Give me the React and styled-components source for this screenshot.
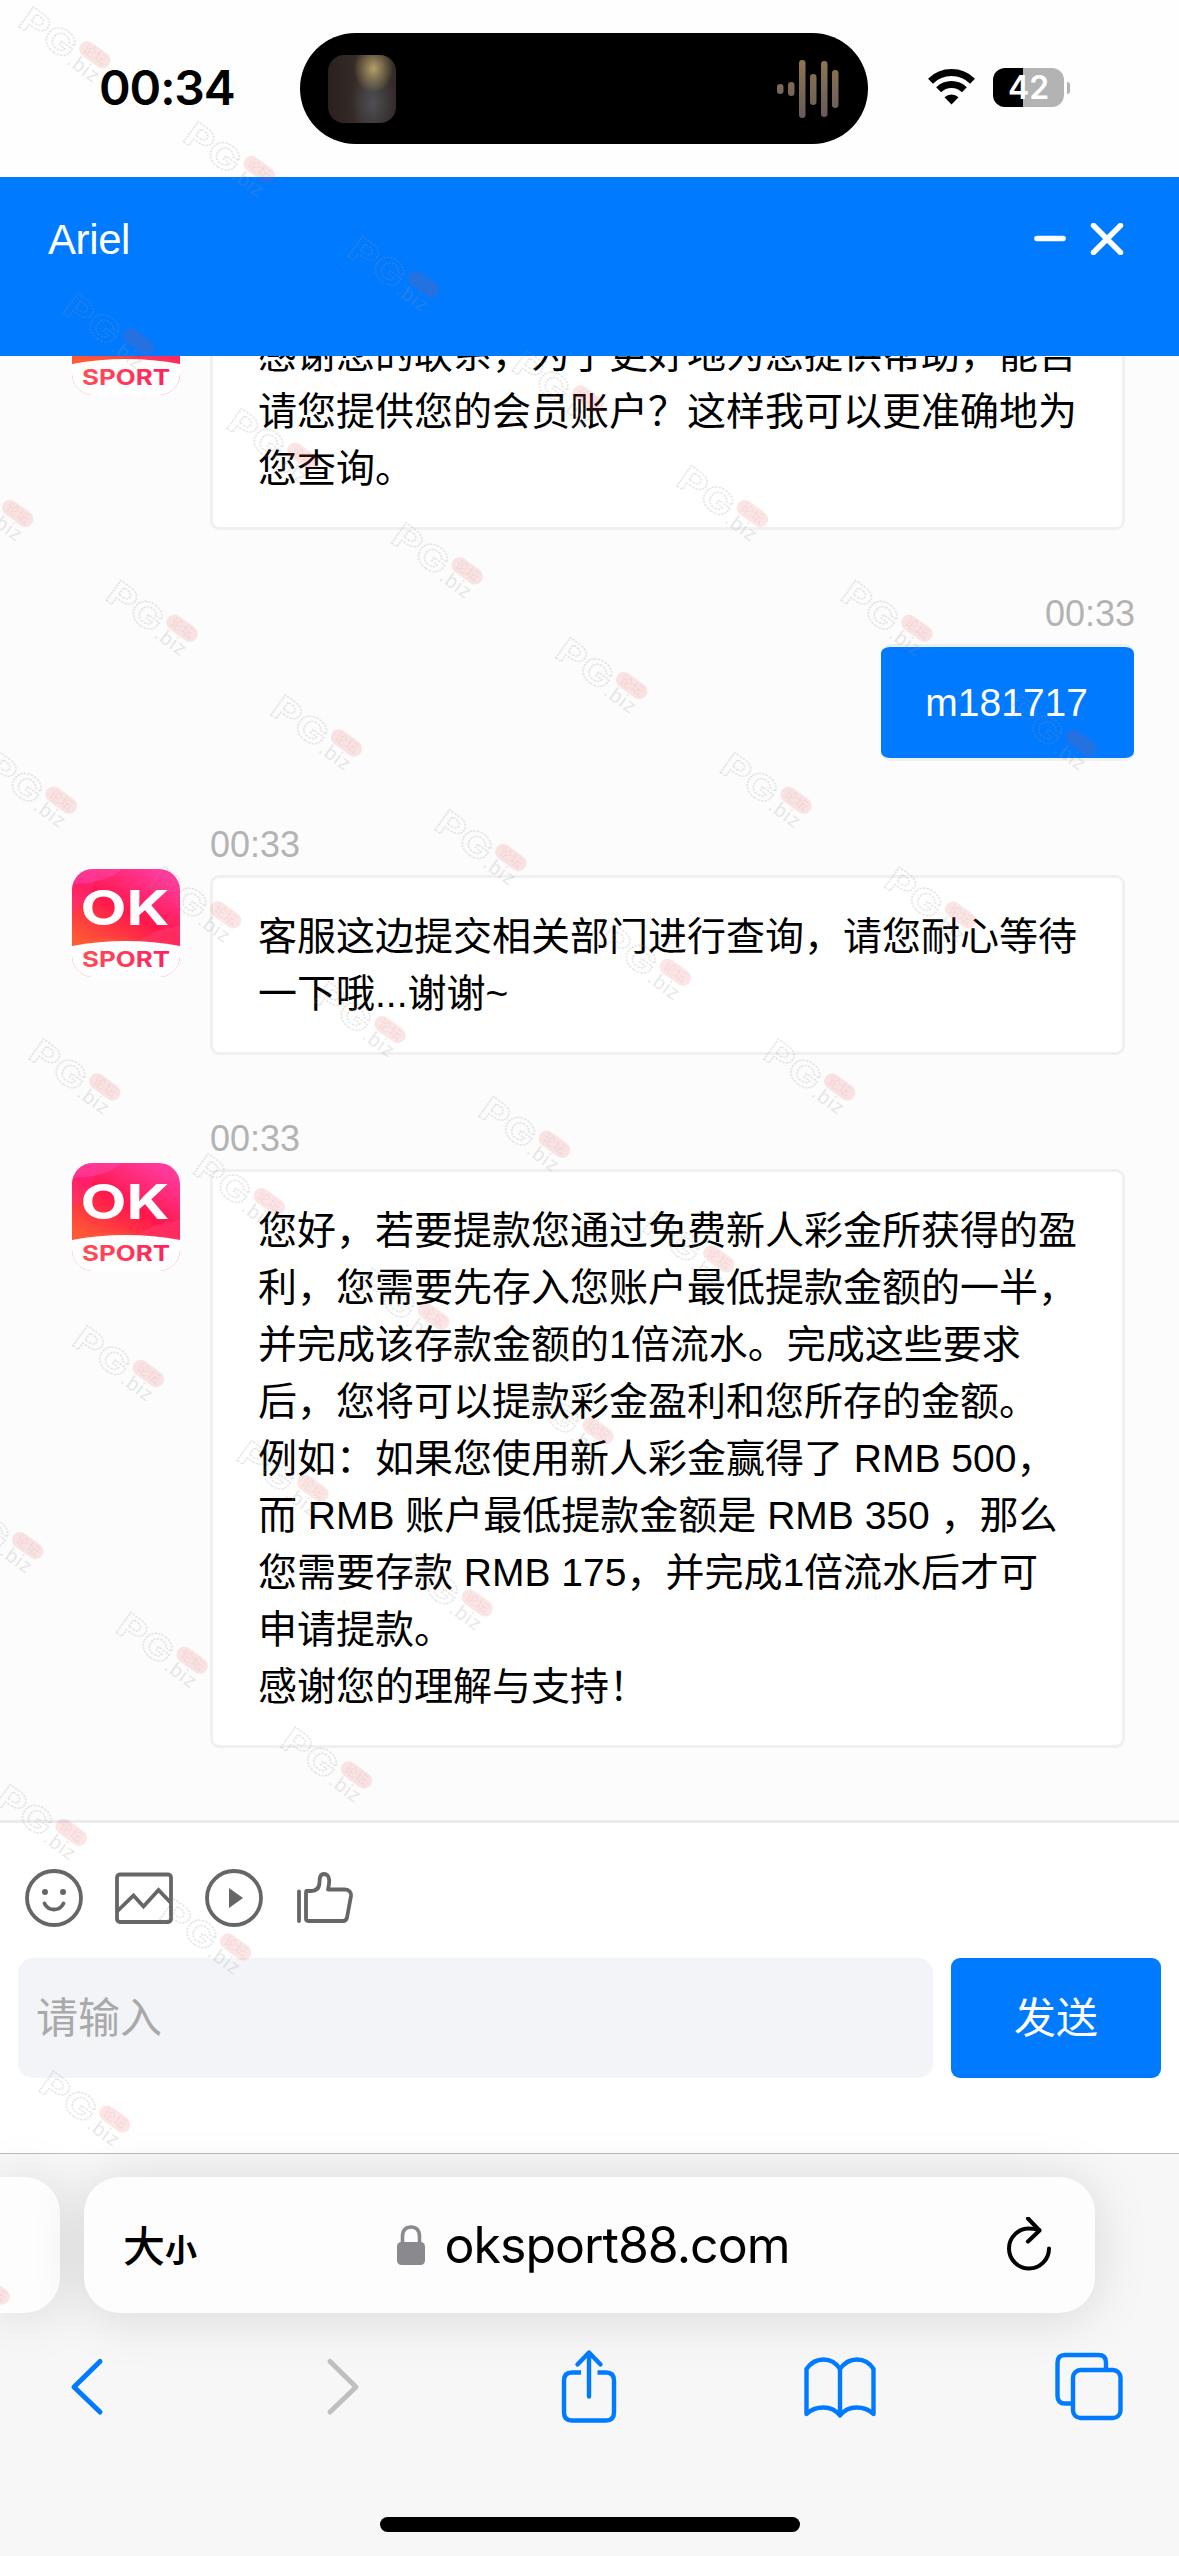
import styled, { createGlobalStyle } from 'styled-components';

const GlobalStyle = createGlobalStyle`
  * {
    box-sizing: border-box;
  }

  body {
    margin: 0;
    font-family: 'Liberation Sans', 'Noto Sans CJK SC', sans-serif;
    color: #000;
  }

  svg {
    display: block;
    flex-shrink: 0;
  }
`;

const Screen = styled.div`
  position: relative;
  display: flex;
  flex-direction: column;
  width: 1179px;
  height: 2556px;
  overflow: hidden;
  background: #fefefe;
`;

/* status bar */

const StatusBar = styled.div`
  display: grid;
  grid-template-columns: 300px 568px 1fr;
  height: 177px;
  flex-shrink: 0;
`;

const Clock = styled.div`
  padding: 58px 0 0 99px;
  font-family: Inter, sans-serif;
  font-size: 48px;
  font-weight: 600;
  line-height: 60px;
  letter-spacing: -1.1px;
`;

const Island = styled.div`
  display: flex;
  align-items: center;
  justify-content: space-between;
  height: 111px;
  margin-top: 33px;
  padding: 0 29px 0 28px;
  border-radius: 56px;
  background: #000;
`;

const Artwork = styled.div`
  width: 68px;
  height: 68px;
  border-radius: 16px;
  background:
    radial-gradient(ellipse 20px 24px at 67% 20%, #b3a068, transparent),
    radial-gradient(ellipse 22px 36px at 66% 70%, #4e4f55, transparent),
    linear-gradient(90deg, #29211f, #382e29 50%, #332b2a);
`;

const StatusIcons = styled.div`
  display: flex;
  gap: 18px;
  padding: 68px 0 0 60px;
`;

const Battery = styled.div`
  display: flex;
  align-items: center;
  height: 39px;
`;

const BatteryBody = styled.div`
  width: 71px;
  height: 39px;
  border-radius: 12px;
  background: linear-gradient(90deg, #000 30px, #b3b3b3 30px);
  color: #fff;
  font-family: Inter, sans-serif;
  font-size: 32px;
  font-weight: 600;
  line-height: 39px;
  text-align: center;
`;

const BatteryCap = styled.div`
  width: 3px;
  height: 12px;
  margin-left: 3px;
  border-radius: 0 3px 3px 0;
  background: #b3b3b3;
`;

/* chat */

const Header = styled.header`
  display: flex;
  justify-content: space-between;
  height: 179px;
  padding: 38px 55px 0 48px;
  flex-shrink: 0;
  background: #007aff;
  color: #fff;
`;

const AgentName = styled.div`
  padding-top: 1px;
  font-size: 42px;
  line-height: 48px;
  letter-spacing: -0.4px;
`;

const HeaderActions = styled.div`
  display: flex;
  align-items: flex-start;
  gap: 23px;
  padding-top: 8px;
`;

const Messages = styled.main`
  display: flex;
  flex-direction: column;
  justify-content: flex-end;
  gap: 63px;
  height: 1464px;
  padding-bottom: 72px;
  flex-shrink: 0;
  overflow: hidden;
  background: #fcfcfc;
`;

const AgentMessage = styled.div`
  display: grid;
  grid-template-columns: 108px 915px;
  column-gap: 30px;
  padding-left: 72px;
  flex-shrink: 0;
`;

const AvatarSlot = styled.div`
  padding-top: 45px;
`;

const UserMessage = styled.div`
  display: flex;
  flex-direction: column;
  align-items: flex-end;
  padding-right: 44px;
  flex-shrink: 0;
`;

const Time = styled.div`
  height: 42px;
  margin-bottom: 9px;
  color: #b3b3b3;
  font-size: 36px;
  line-height: 42px;
`;

const Bubble = styled.div`
  padding: 30px 0 30px 45px;
  border: 3px solid #f0f0f0;
  border-radius: 9px;
  background: #fff;
  font-size: 39px;
  line-height: 57px;
  white-space: nowrap;
`;

const Line = styled.div`
  height: 57px;
`;

const UserBubble = styled.div`
  height: 117px;
  padding: 0 46px 0 44px;
  margin-right: 1px;
  border: solid #f0f0f0;
  border-width: 3px 0;
  border-radius: 9px;
  background: #007aff;
  color: #fff;
  font-size: 39px;
  line-height: 111px;
`;

/* composer */

const Composer = styled.section`
  height: 333px;
  padding: 45px 18px 0;
  border-top: 3px solid #ebebeb;
  flex-shrink: 0;
  background: #fff;
`;

const Tools = styled.div`
  display: flex;
  gap: 30px;
  padding: 0 6px;
  margin-bottom: 30px;
`;

const InputRow = styled.div`
  display: flex;
  gap: 18px;
`;

const Input = styled.div`
  flex: 1;
  height: 120px;
  padding-left: 18px;
  border-radius: 15px;
  background: #f2f4f8;
  color: #a9a9a9;
  font-size: 42px;
  line-height: 121px;
`;

const SendButton = styled.button`
  width: 210px;
  height: 120px;
  padding: 0;
  border: 0;
  border-radius: 9px;
  background: #007aff;
  color: #fff;
  font: inherit;
  font-size: 42px;
  line-height: 121px;
`;

/* browser chrome */

const Browser = styled.footer`
  flex: 1;
  border-top: 1px solid #bbb;
  background: #f7f7f7;
`;

const TabStrip = styled.div`
  display: flex;
  gap: 24px;
  padding-top: 23px;
`;

const PreviousTab = styled.div`
  width: 60px;
  height: 136px;
  border-radius: 0 36px 36px 0;
  background: #fdfdfd;
  box-shadow: 0 4px 54px rgba(0, 0, 0, 0.13);
`;

const AddressBar = styled.div`
  display: grid;
  grid-template-columns: 1fr auto 1fr;
  align-items: center;
  width: 1011px;
  height: 136px;
  padding: 0 43px 0 39px;
  border-radius: 36px;
  background: #fdfdfd;
  box-shadow: 0 4px 54px rgba(0, 0, 0, 0.13);
`;

const TextSize = styled.div`
  display: flex;
  align-items: baseline;
  padding-top: 2px;
  font-family: 'Noto Sans CJK SC', sans-serif;
  font-size: 42px;
  font-weight: 500;
  line-height: 60px;
`;

const SmallGlyph = styled.span`
  font-size: 32px;
  font-weight: 700;
`;

const Address = styled.div`
  display: flex;
  align-items: center;
  gap: 20px;
  padding-left: 11px;
  font-family: Inter, sans-serif;
  font-size: 50px;
  line-height: 60px;
  letter-spacing: -1px;
`;

const ReloadSlot = styled.div`
  justify-self: end;
`;

const NavBar = styled.nav`
  display: grid;
  grid-template-columns: 257px 234px 243px 251px 71px;
  align-items: center;
  height: 80px;
  margin-top: 34px;
  padding-left: 68px;
`;

const HomeIndicator = styled.div`
  width: 420px;
  height: 15px;
  margin: 90px auto 0 380px;
  border-radius: 8px;
  background: #000;
`;

const WatermarkLayer = styled.svg`
  position: absolute;
  top: 0;
  left: 0;
  pointer-events: none;
`;

const agentMessages = [
  {
    id: 1,
    lines: [
      '感谢您的联系,为了更好地为您提供帮助,能否',
      '请您提供您的会员账户?这样我可以更准确地为',
      '您查询。',
    ],
  },
  {
    id: 2,
    lines: ['客服这边提交相关部门进行查询,请您耐心等待', '一下哦...谢谢~'],
  },
  {
    id: 3,
    lines: [
      '您好,若要提款您通过免费新人彩金所获得的盈',
      '利,您需要先存入您账户最低提款金额的一半,',
      '并完成该存款金额的1倍流水。完成这些要求',
      '后,您将可以提款彩金盈利和您所存的金额。',
      '例如:如果您使用新人彩金赢得了 RMB 500,',
      '而 RMB 账户最低提款金额是 RMB 350 ,那么',
      '您需要存款 RMB 175,并完成1倍流水后才可',
      '申请提款。',
      '感谢您的理解与支持!',
    ],
  },
].map((message) => ({
  ...message,
  // full-width punctuation
  lines: message.lines.map((line) =>
    line.replace(/,/g, '\uff0c').replace(/:/g, '\uff1a').replace(/\?/g, '\uff1f').replace(/!/g, '\uff01')
  ),
}));

const waveBars = [
  [84, 94],
  [82, 96],
  [60, 118],
  [74, 105],
  [61, 117],
  [70, 108],
];

// [row, first, last] of the diagonal watermark grid
const watermarkRows = [
  [0, 0, 6],
  [1, 2, 7],
  [2, 3, 8],
  [3, 5, 9],
  [4, 7, 10],
  [5, 9, 11],
  [6, 10, 12],
  [7, 12, 13],
  [8, 14, 14],
  [9, 15, 15],
];

function Avatar() {
  return (
    <svg width="108" height="108" viewBox="0 0 108 108">
      <defs>
        <linearGradient id="logoBg" x1="0.75" y1="0" x2="0.3" y2="0.8">
          <stop offset="0" stopColor="#ff3a9c" />
          <stop offset="0.5" stopColor="#ff174c" />
          <stop offset="1" stopColor="#ff5a35" />
        </linearGradient>
        <radialGradient id="logoGlow" cx="0.45" cy="0.72" r="0.45">
          <stop offset="0" stopColor="#ff9a3c" />
          <stop offset="1" stopColor="#ff5a35" stopOpacity="0" />
        </radialGradient>
        <linearGradient id="sportFill">
          <stop offset="0" stopColor="#ff4f55" />
          <stop offset="1" stopColor="#ff1f5e" />
        </linearGradient>
        <clipPath id="logoClip">
          <rect width="108" height="108" rx="21" />
        </clipPath>
      </defs>
      <g clipPath="url(#logoClip)">
        <rect width="108" height="108" fill="url(#logoBg)" />
        <ellipse cx="45" cy="76" rx="52" ry="22" fill="url(#logoGlow)" />
        <path d="M0 0h25Q22 30 0 45z" fill="#ff2f9a" opacity="0.35" />
        <path d="M0 15Q35 14 50 0H0z" fill="#ff4fc0" opacity="0.4" />
        <path d="M65 73Q85 58 108 57V80z" fill="#ff3c70" opacity="0.5" />
        <path d="M0 77Q54 67 108 77V108H0z" fill="#fff" />
      </g>
      <text
        x="8.5"
        y="55.5"
        fill="#fff"
        fontFamily="Inter, sans-serif"
        fontSize="48.5"
        fontWeight="700"
        textLength="89"
        lengthAdjust="spacingAndGlyphs"
      >
        OK
      </text>
      <text
        x="10"
        y="97.5"
        fill="url(#sportFill)"
        fontFamily="Inter, sans-serif"
        fontSize="21.5"
        fontWeight="700"
        textLength="88"
        lengthAdjust="spacingAndGlyphs"
      >
        SPORT
      </text>
    </svg>
  );
}

function Watermark() {
  const marks = watermarkRows.flatMap(([row, first, last]) =>
    Array.from({ length: last - first + 1 }, (_, i) => ({
      x: 31.5 - 285.2 * row + 164.4 * (first + i),
      y: 5 + 57.3 * row + 114.7 * (first + i),
    }))
  );
  return (
    <WatermarkLayer width="1179" height="2556" viewBox="0 0 1179 2556">
      {marks.map(({ x, y }) => (
        <g key={`${x}-${y}`} transform={`translate(${x} ${y}) rotate(36)`}>
          <text
            x="0"
            y="25"
            fill="none"
            stroke="#999"
            strokeOpacity="0.26"
            strokeWidth="1.4"
            strokeDasharray="2 1"
            fontFamily="Inter, sans-serif"
            fontSize="34"
            fontWeight="700"
            textLength="61"
            lengthAdjust="spacingAndGlyphs"
          >
            PG
          </text>
          <text
            x="62"
            y="27"
            fill="#999"
            fillOpacity="0.24"
            fontSize="20"
            textLength="34"
          >
            .biz
          </text>
          <rect x="63" y="-5" width="35" height="16" rx="8" fill="#e84545" fillOpacity="0.14" />
          <text x="67.5" y="7.5" fill="#a66" fillOpacity="0.12" fontSize="13">
            论坛
          </text>
        </g>
      ))}
    </WatermarkLayer>
  );
}

function StatusArea() {
  return (
    <StatusBar>
      <Clock>00:34</Clock>
      <Island>
        <Artwork />
        <svg width="62" height="60" viewBox="777 59 62 60">
          <linearGradient id="waveFill" x1="0" y1="59" x2="0" y2="119" gradientUnits="userSpaceOnUse">
            <stop offset="0" stopColor="#8f7650" />
            <stop offset="1" stopColor="#66595a" />
          </linearGradient>
          {waveBars.map(([top, bottom], i) => (
            <rect
              key={i}
              x={777 + i * 11}
              y={top}
              width="6.5"
              height={bottom - top}
              rx="3.2"
              fill="url(#waveFill)"
            />
          ))}
        </svg>
      </Island>
      <StatusIcons>
        <svg width="47" height="39" viewBox="0 0 47 39">
          <path d="M2.5 13.2a30 30 0 0 1 42 0" fill="none" stroke="#000" strokeWidth="7" />
          <path d="M10.6 21.8a18.500 18.500 0 0 1 25.800 0" fill="none" stroke="#000" strokeWidth="7" />
          <path d="M16.500 29.2a10.3 10.3 0 0 1 14 0L23.500 36.500z" />
        </svg>
        <Battery>
          <BatteryBody>42</BatteryBody>
          <BatteryCap />
        </Battery>
      </StatusIcons>
    </StatusBar>
  );
}

function ComposerTools() {
  return (
    <Tools>
      <svg width="60" height="60" viewBox="0 0 60 60" fill="none" stroke="#666" strokeWidth="3.8">
        <circle cx="30" cy="30" r="27" />
        <circle cx="21" cy="24" r="3" fill="#666" stroke="none" />
        <circle cx="39" cy="24" r="3" fill="#666" stroke="none" />
        <path d="M20.5 35.5c4 8 15 8 19 0" strokeLinecap="round" />
      </svg>
      <svg width="60" height="60" viewBox="0 0 60 60" fill="none" stroke="#666" strokeWidth="3.8">
        <rect x="3" y="6.5" width="54" height="47.5" rx="3" />
        <path d="M3 43.5l16.5-16L29.5 38.5 44.5 22 57 35" />
      </svg>
      <svg width="60" height="60" viewBox="0 0 60 60" fill="none" stroke="#666" strokeWidth="3.8">
        <circle cx="30" cy="30" r="27" />
        <path d="M25 20v20l14-10z" fill="#666" stroke="none" />
      </svg>
      <svg
        width="60"
        height="60"
        viewBox="0 0 60 60"
        fill="none"
        stroke="#666"
        strokeWidth="3.8"
        strokeLinecap="round"
        strokeLinejoin="round"
      >
        <path d="M5 23.5v29.5" />
        <path d="M12.5 23h4c7 0 9-4 9-9 0-5 1-8 4.5-8 4 0 6 4 5 10l-1 5.5h17c4 0 6.500 3 6 6.500l-4 21.500q-.8 3.500-4 3.500h-34.500q-2.500 0-2.500-2.500V25.500q0-2.500.5-2.500z" />
      </svg>
    </Tools>
  );
}

function BrowserNav() {
  return (
    <NavBar>
      <svg width="37" height="60" viewBox="0 0 37 60" fill="none" stroke="#007aff" strokeWidth="5" strokeLinecap="round" strokeLinejoin="round">
        <path d="M32 4.5L6 30l26 25" />
      </svg>
      <svg width="37" height="60" viewBox="0 0 37 60" fill="none" stroke="#bfbfbf" strokeWidth="5" strokeLinecap="round" strokeLinejoin="round">
        <path d="M5 4.5L31 30 5 55" />
      </svg>
      <svg width="60" height="76" viewBox="0 0 60 76" fill="none" stroke="#007aff" strokeWidth="4.4" strokeLinejoin="round">
        <path d="M22 23.5h-9q-8 0-8 8v32q0 8 8 8h34q8 0 8-8v-32q0-8-8-8h-8.5" />
        <path d="M30 47.5V4M18.5 15.5L30 3.5l11.5 12" strokeLinecap="round" />
      </svg>
      <svg width="76" height="66" viewBox="0 0 76 66" fill="none" stroke="#007aff" strokeWidth="4.4" strokeLinejoin="round">
        <path d="M4.5 60V15Q11 5.5 21.5 5.5T38 15q6.5-9.5 17-9.5T71.5 15v45Q65 53.5 54.5 53.5T38 61.5Q32 53.5 21.5 53.5T4.5 60zM38 15v46" />
      </svg>
      <svg width="71" height="70" viewBox="0 0 71 70" fill="none" stroke="#007aff" strokeWidth="4.4">
        <path d="M18 51.5h-6q-7.5 0-7.5-7.5V10.5Q4.5 3 12 3h33.5Q53 3 53 10.5V17" />
        <rect x="20" y="18" width="47.5" height="48" rx="7.5" />
      </svg>
    </NavBar>
  );
}

function App() {
  return (
    <>
      <GlobalStyle />
      <Screen>
        <StatusArea />
        <Header>
          <AgentName>Ariel</AgentName>
          <HeaderActions>
            <svg width="34" height="32" viewBox="0 0 34 32">
              <path d="M4 15.5h26" stroke="#fff" strokeWidth="5.6" strokeLinecap="round" />
            </svg>
            <svg width="34" height="32" viewBox="0 0 34 32">
              <path d="M3.5 2.5l27 27m0-27l-27 27" stroke="#fff" strokeWidth="5.4" strokeLinecap="round" />
            </svg>
          </HeaderActions>
        </Header>
        <Messages>
          {agentMessages.map((message) => [
            message.id === 2 && (
              <UserMessage key="user">
                <Time>00:33</Time>
                <UserBubble>m181717</UserBubble>
              </UserMessage>
            ),
            <AgentMessage key={message.id}>
              <AvatarSlot>
                <Avatar />
              </AvatarSlot>
              <div>
                <Time>00:33</Time>
                <Bubble>
                  {message.lines.map((line) => (
                    <Line key={line}>{line}</Line>
                  ))}
                </Bubble>
              </div>
            </AgentMessage>,
          ])}
        </Messages>
        <Composer>
          <ComposerTools />
          <InputRow>
            <Input>请输入</Input>
            <SendButton>发送</SendButton>
          </InputRow>
        </Composer>
        <Browser>
          <TabStrip>
            <PreviousTab />
            <AddressBar>
              <TextSize>
                大<SmallGlyph>小</SmallGlyph>
              </TextSize>
              <Address>
                <svg width="28" height="40" viewBox="0 0 28 40">
                  <path d="M5.5 19v-7.5C5.5 5 9 2 14 2s8.5 3 8.5 9.5V19" fill="none" stroke="#8a8a8e" strokeWidth="3.6" />
                  <rect y="17" width="28" height="23" rx="4.5" fill="#8a8a8e" />
                </svg>
                oksport88.com
              </Address>
              <ReloadSlot>
                <svg width="46" height="56" viewBox="0 0 46 56" fill="none" stroke="#000" strokeWidth="4" strokeLinecap="round" strokeLinejoin="round">
                  <path d="M43 31.5a20 20 0 1 1-20-20q5 0 10 1.5" />
                  <path d="M22 1.5l11.5 12L22 24.5" />
                </svg>
              </ReloadSlot>
            </AddressBar>
          </TabStrip>
          <BrowserNav />
          <HomeIndicator />
        </Browser>
        <Watermark />
      </Screen>
    </>
  );
}

export default App;
